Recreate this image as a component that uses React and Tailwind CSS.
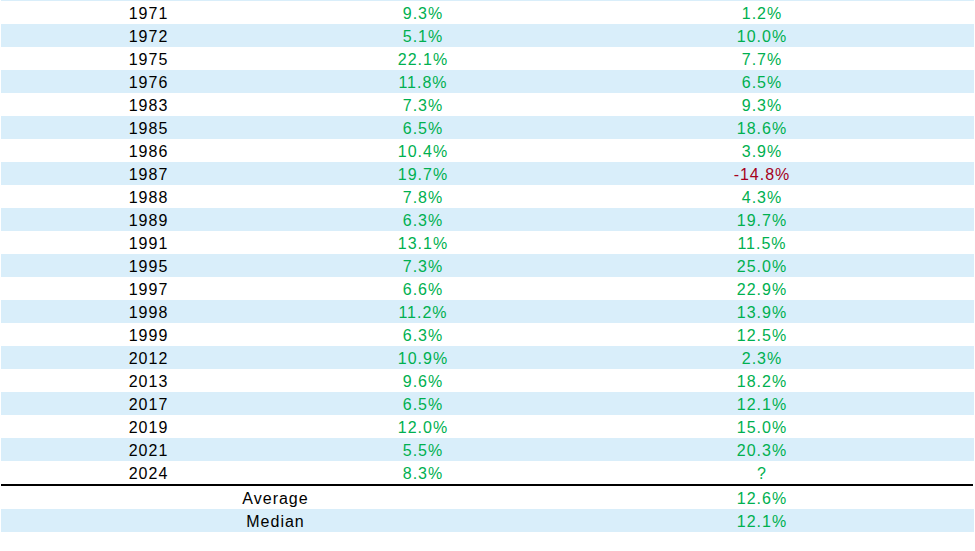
import React from "react";

const rows = [
  ["1971", "9.3%", "1.2%"],
  ["1972", "5.1%", "10.0%"],
  ["1975", "22.1%", "7.7%"],
  ["1976", "11.8%", "6.5%"],
  ["1983", "7.3%", "9.3%"],
  ["1985", "6.5%", "18.6%"],
  ["1986", "10.4%", "3.9%"],
  ["1987", "19.7%", "-14.8%"],
  ["1988", "7.8%", "4.3%"],
  ["1989", "6.3%", "19.7%"],
  ["1991", "13.1%", "11.5%"],
  ["1995", "7.3%", "25.0%"],
  ["1997", "6.6%", "22.9%"],
  ["1998", "11.2%", "13.9%"],
  ["1999", "6.3%", "12.5%"],
  ["2012", "10.9%", "2.3%"],
  ["2013", "9.6%", "18.2%"],
  ["2017", "6.5%", "12.1%"],
  ["2019", "12.0%", "15.0%"],
  ["2021", "5.5%", "20.3%"],
  ["2024", "8.3%", "?"],
];

const App = () => {
  return (
    <div
      className="w-[975px] h-[551px] bg-white text-[16px] tracking-[1px] leading-[20px]"
      style={{ fontFamily: '"Liberation Sans", Arial, sans-serif' }}
    >
      <div className="h-px ml-px w-[973px] bg-[#d9eefa]" />
      <div className="ml-px w-[973px]">
        {rows.map(([year, a, b], i) => (
          <div
            key={year}
            className={`grid grid-cols-[295px_254px_1fr] h-[23px] items-center pt-[3px] ${
              i % 2 === 1 ? "bg-[#d9eefa]" : "bg-white"
            }`}
          >
            <div className="text-center text-black">{year}</div>
            <div className="text-center text-[#00b050]">{a}</div>
            <div
              className={`text-center ${
                b.startsWith("-") ? "text-[#a50021]" : "text-[#00b050]"
              }`}
            >
              {b}
            </div>
          </div>
        ))}
        {/* summary */}
        <div className="h-[2px] bg-black w-[972px]" />
        <div className="grid grid-cols-[549px_1fr] h-[23px] items-center pt-[3px] bg-white">
          <div className="text-center text-black">Average</div>
          <div className="text-center text-[#00b050]">12.6%</div>
        </div>
        <div className="grid grid-cols-[549px_1fr] h-[23px] items-center pt-[3px] bg-[#d9eefa]">
          <div className="text-center text-black">Median</div>
          <div className="text-center text-[#00b050]">12.1%</div>
        </div>
      </div>
    </div>
  );
};

export default App;
